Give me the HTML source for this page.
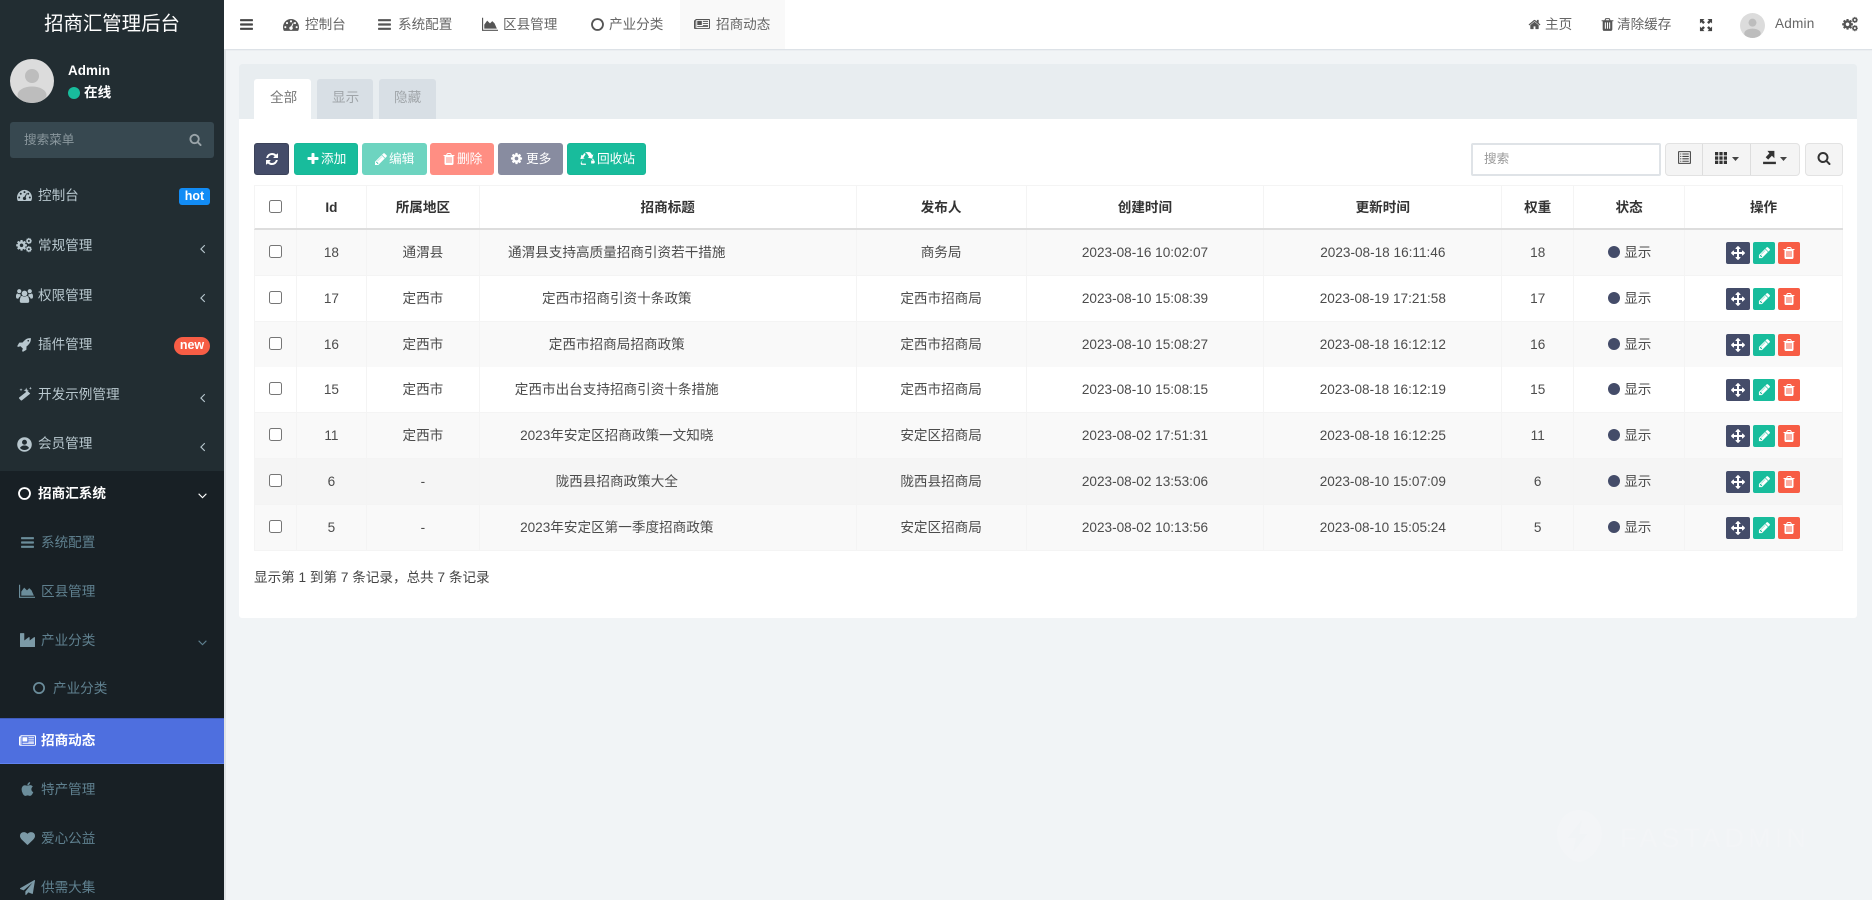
<!DOCTYPE html>
<html lang="zh"><head><meta charset="utf-8"><title>招商汇管理后台</title>
<style>
*{box-sizing:border-box}
html,body{margin:0;padding:0;width:1872px;height:900px;overflow:hidden;background:#f1f4f6;font:13.6px "Liberation Sans","Noto Sans CJK SC",sans-serif;color:#555}
.a,.t,svg.i{position:absolute}
.t{white-space:nowrap;line-height:20px}
svg.i{fill:currentColor;display:block}
#side{position:absolute;left:0;top:0;width:224px;height:900px;background:#222d32;overflow:hidden}
#side .m{color:#b8c7ce}
#side .s{color:#5f808f}
#hd{position:absolute;left:224px;top:0;width:1648px;height:49px;background:#fff}
.b{position:absolute;top:143px;height:32px;border-radius:3px;color:#fff;line-height:30px;white-space:nowrap;font-size:12.7px}
.r{position:absolute;left:254px;width:1589px;display:flex;border-bottom:1px solid #f4f4f4;border-left:1px solid #f4f4f4}
.r>div{border-right:1px solid #f4f4f4;text-align:center;position:relative;white-space:nowrap;color:#4c4c4c}
.r.h>div{font-weight:bold;color:#333}
.w1{width:42px}.w2{width:70px}.w3{width:113px}.w4{width:377px}.w5{width:170px}.w6{width:238px}.w7{width:238px}.w8{width:72px}.w9{width:111px}.w10{width:158px}
.cb{position:absolute;left:14px;width:13px;height:13px;background:#fff;border:1px solid #767676;border-radius:2.5px}
.d{position:absolute;left:34px;width:12px;height:12px;border-radius:50%;background:#444c69}
.st{position:absolute;left:50px}
.ab{position:absolute;height:22px;top:12px;border-radius:2px;color:#fff}
</style></head><body>
<svg width="0" height="0" style="position:absolute">
<symbol id="bars" viewBox="0 0 1792 1792"><path d="M1664 1344v128q0 26-19 45t-45 19h-1408q-26 0-45-19t-19-45v-128q0-26 19-45t45-19h1408q26 0 45 19t19 45zm0-512v128q0 26-19 45t-45 19h-1408q-26 0-45-19t-19-45v-128q0-26 19-45t45-19h1408q26 0 45 19t19 45zm0-512v128q0 26-19 45t-45 19h-1408q-26 0-45-19t-19-45v-128q0-26 19-45t45-19h1408q26 0 45 19t19 45z"/></symbol>
<symbol id="plus" viewBox="0 0 1792 1792"><path d="M1600 736v192q0 40-28 68t-68 28h-416v416q0 40-28 68t-68 28h-192q-40 0-68-28t-28-68v-416h-416q-40 0-68-28t-28-68v-192q0-40 28-68t68-28h416v-416q0-40 28-68t68-28h192q40 0 68 28t28 68v416h416q40 0 68 28t28 68z"/></symbol>
<symbol id="search" viewBox="0 0 1792 1792"><path d="M1216 832q0-185-131.5-316.5t-316.5-131.5-316.5 131.5-131.5 316.5 131.5 316.5 316.5 131.5 316.5-131.5 131.5-316.5zm512 832q0 52-38 90t-90 38q-54 0-90-38l-343-342q-179 124-399 124-143 0-273.5-55.5t-225-150-150-225-55.5-273.5 55.5-273.5 150-225 225-150 273.5-55.5 273.5 55.5 225 150 150 225 55.5 273.5q0 220-124 399l343 343q37 37 37 90z"/></symbol>
<symbol id="trash" viewBox="0 0 1792 1792"><path d="M704 1376v-704q0-14-9-23t-23-9h-64q-14 0-23 9t-9 23v704q0 14 9 23t23 9h64q14 0 23-9t9-23zm256 0v-704q0-14-9-23t-23-9h-64q-14 0-23 9t-9 23v704q0 14 9 23t23 9h64q14 0 23-9t9-23zm256 0v-704q0-14-9-23t-23-9h-64q-14 0-23 9t-9 23v704q0 14 9 23t23 9h64q14 0 23-9t9-23zm-544-992h448l-48-117q-7-9-17-11h-317q-10 2-17 11zm928 32v64q0 14-9 23t-23 9h-96v948q0 83-47 143.5t-113 60.5h-832q-66 0-113-58.5t-47-141.5v-952h-96q-14 0-23-9t-9-23v-64q0-14 9-23t23-9h309l70-167q15-37 54-63t79-26h320q40 0 79 26t54 63l70 167h309q14 0 23 9t9 23z"/></symbol>
<symbol id="pencil" viewBox="0 0 1792 1792"><path d="M491 1536l91-91-235-235-91 91v107h128v128h107zm523-928q0-22-22-22-10 0-17 7l-542 542q-7 7-7 17 0 22 22 22 10 0 17-7l542-542q7-7 7-17zm-54-192l416 416-832 832h-416v-416zm683 96q0 53-37 90l-166 166-416-416 166-165q36-38 90-38 53 0 91 38l235 234q37 39 37 91z"/></symbol>
<symbol id="move" viewBox="0 0 1792 1792"><path d="M1792 896q0 26-19 45l-256 256q-19 19-45 19t-45-19-19-45v-128h-384v384h128q26 0 45 19t19 45-19 45l-256 256q-19 19-45 19t-45-19l-256-256q-19-19-19-45t19-45 45-19h128v-384h-384v128q0 26-19 45t-45 19-45-19l-256-256q-19-19-19-45t19-45l256-256q19-19 45-19t45 19 19 45v128h384v-384h-128q-26 0-45-19t-19-45 19-45l256-256q19-19 45-19t45 19l256 256q19 19 19 45t-19 45-45 19h-128v384h384v-128q0-26 19-45t45-19 45 19l256 256q19 19 19 45z"/></symbol>
<symbol id="home" viewBox="0 0 1792 1792"><path d="M1472 992v480q0 26-19 45t-45 19h-384v-384h-256v384h-384q-26 0-45-19t-19-45v-480q0-1 .5-3t.5-3l575-474 575 474q1 2 1 6zm223-69l-62 74q-8 9-21 11h-3q-13 0-21-7l-692-577-692 577q-12 8-24 7-13-2-21-11l-62-74q-8-10-7-23.5t11-21.5l719-599q32-26 76-26t76 26l244 204v-195q0-14 9-23t23-9h192q14 0 23 9t9 23v408l219 182q10 8 11 21.5t-7 23.5z"/></symbol>
<symbol id="heart" viewBox="0 0 1792 1792"><path d="M896 1664q-26 0-44-18l-624-602q-10-8-27.5-26t-55.5-65.5-68-97.5-53.5-121-23.5-138q0-220 127-344t351-124q62 0 126.5 21.5t120 58 95.5 68.5 76 68q36-36 76-68t95.5-68.5 120-58 126.5-21.5q224 0 351 124t127 344q0 221-229 450l-623 600q-18 18-44 18z"/></symbol>
<symbol id="plane" viewBox="0 0 1792 1792"><path d="M1764 11q33 24 27 64l-256 1536q-5 29-32 45-14 8-31 8-11 0-24-5l-453-185-242 295q-18 23-49 23-13 0-22-4-19-7-30.5-23.5t-11.5-36.5v-349l864-1059-1069 925-395-162q-37-14-40-55-2-40 32-59l1664-960q15-9 32-9 20 0 36 11z"/></symbol>
<symbol id="rocket" viewBox="0 0 1792 1792"><path d="M1440 448q0-40-28-68t-68-28-68 28-28 68 28 68 68 28 68-28 28-68zm224-288q0 249-75.5 430.5t-253.5 360.5q-81 80-195 176l-20 379q-2 16-16 26l-384 224q-7 4-16 4-12 0-23-9l-64-64q-13-14-8-32l85-276-281-281-276 85q-3 1-9 1-14 0-23-9l-64-64q-17-19-5-39l224-384q10-14 26-16l379-20q96-114 176-195 188-187 358-258t431-71q14 0 24 9.5t10 22.5z"/></symbol>
<symbol id="circ" viewBox="0 0 1792 1792"><path d="M896 352q-148 0-273 73t-198 198-73 273 73 273 198 198 273 73 273-73 198-198 73-273-73-273-198-198-273-73zm768 544q0 209-103 385.5t-279.5 279.5-385.5 103-385.5-103-279.5-279.5-103-385.5 103-385.5 279.5-279.5 385.5-103 385.5 103 279.5 279.5 103 385.5z"/></symbol>
<symbol id="aleft" viewBox="0 0 1792 1792"><path d="M1203 544q0 13-10 23l-393 393 393 393q10 10 10 23t-10 23l-50 50q-10 10-23 10t-23-10l-466-466q-10-10-10-23t10-23l466-466q10-10 23-10t23 10l50 50q10 10 10 23z"/></symbol>
<symbol id="adown" viewBox="0 0 1792 1792"><path d="M1395 736q0 13-10 23l-466 466q-10 10-23 10t-23-10l-466-466q-10-10-10-23t10-23l50-50q10-10 23-10t23 10l393 393 393-393q10-10 23-10t23 10l50 50q10 10 10 23z"/></symbol>
<symbol id="refresh" viewBox="0 0 1792 1792"><path d="M1639 1056q0 5-1 7-64 268-268 434.5t-478 166.5q-146 0-282.5-55t-243.5-157l-129 129q-19 19-45 19t-45-19-19-45v-448q0-26 19-45t45-19h448q26 0 45 19t19 45-19 45l-137 137q71 66 161 102t187 36q134 0 250-65t186-179q11-17 53-117 8-23 30-23h192q13 0 22.5 9.5t9.5 22.5zm25-800v448q0 26-19 45t-45 19h-448q-26 0-45-19t-19-45 19-45l138-138q-148-137-349-137-134 0-250 65t-186 179q-11 17-53 117-8 23-30 23h-199q-13 0-22.5-9.5t-9.5-22.5v-7q65-268 270-434.5t480-166.5q146 0 284 55.5t245 156.5l130-129q19-19 45-19t45 19 19 45z"/></symbol>
<symbol id="cog" viewBox="0 0 1792 1792"><path d="M1152 896q0-106-75-181t-181-75-181 75-75 181 75 181 181 75 181-75 75-181zm512-109v222q0 12-8 23t-20 13l-185 28q-19 54-39 91 35 50 107 138 10 12 10 25t-9 23q-27 37-99 108t-94 71q-12 0-26-9l-138-108q-44 23-91 38-16 136-29 186-7 28-36 28h-222q-14 0-24.5-8.5t-11.5-21.5l-28-184q-49-16-90-37l-141 107q-10 9-25 9-14 0-25-11-126-114-165-168-7-10-7-23 0-12 8-23 15-21 51-66.5t54-70.5q-27-50-41-99l-183-27q-13-2-21-12.5t-8-23.5v-222q0-12 8-23t19-13l186-28q14-46 39-92-40-57-107-138-10-12-10-24 0-10 9-23 26-36 98.5-107.5t94.5-71.5q13 0 26 10l138 107q44-23 91-38 16-136 29-186 7-28 36-28h222q14 0 24.5 8.5t11.5 21.5l28 184q49 16 90 37l142-107q9-9 24-9 13 0 25 10 129 119 165 170 7 8 7 22 0 12-8 23-15 21-51 66.5t-54 70.5q26 50 41 98l183 28q13 2 21 12.5t8 23.5z"/></symbol>
<symbol id="cogs" viewBox="0 0 1792 1792"><use href="#cog" x="-80" y="230" width="1400" height="1400"/><use href="#cog" x="1040" y="40" width="800" height="800"/><use href="#cog" x="1040" y="960" width="800" height="800"/></symbol>
<symbol id="dash" viewBox="0 0 1792 1792"><path fill-rule="evenodd" d="M896 224C400 224 0 640 0 1136c0 150 35 290 100 420h1592c65-130 100-270 100-420 0-496-400-912-896-912zM896 370a120 120 0 1 1 0 240a120 120 0 1 1 0-240zM450 560a120 120 0 1 1 0 240a120 120 0 1 1 0-240zM260 1020a120 120 0 1 1 0 240a120 120 0 1 1 0-240zM1530 1020a120 120 0 1 1 0 240a120 120 0 1 1 0-240zM1340 560a120 120 0 1 1 0 240a120 120 0 1 1 0-240zM1130 620l70 40-170 440c40 40 70 90 70 150 0 110-90 190-200 190s-200-80-200-190 90-200 200-200z"/></symbol>
<symbol id="users" viewBox="0 0 1792 1792"><circle cx="896" cy="680" r="300"/><path d="M400 1500c0-300 100-560 250-560 80 60 160 90 246 90s166-30 246-90c150 0 250 260 250 560 0 110-80 170-180 170H580c-100 0-180-60-180-170z"/><circle cx="340" cy="440" r="220"/><circle cx="1452" cy="440" r="220"/><path d="M0 1000c0-180 50-320 160-320 60 50 120 70 190 70 50 0 90-10 130-30-30 80-20 170 40 240-120 30-220 120-260 260H110C40 1220 0 1120 0 1000zM1792 1000c0-180-50-320-160-320-60 50-120 70-190 70-50 0-90-10-130-30 30 80 20 170-40 240 120 30 220 120 260 260h150c70 0 110-100 110-220z"/></symbol>
<symbol id="magic" viewBox="0 0 1792 1792"><path d="M1254 580l330 330-1000 800q-60 50-120 0l-210-210q-50-60 0-120zM1100 200l80 230 230 80-230 80-80 230-80-230-230-80 230-80zM480 260l50 140 140 50-140 50-50 140-50-140-140-50 140-50zM1600 90l50 130 130 50-130 50-50 130-50-130-130-50 130-50z"/></symbol>
<symbol id="ucirc" viewBox="0 0 1792 1792"><path fill-rule="evenodd" d="M896 128a768 768 0 1 1 0 1536a768 768 0 1 1 0-1536zM896 400a260 260 0 1 0 0 520a260 260 0 1 0 0-520zM896 1000c-230 0-430 110-470 270 110 130 280 210 470 210s360-80 470-210c-40-160-240-270-470-270z"/></symbol>
<symbol id="apple" viewBox="0 0 1792 1792"><path d="M1585 1215q-39 125-123 250-129 196-257 196-49 0-140-32-86-32-151-32-61 0-142 33-81 34-132 34-152 0-301-259-147-261-147-503 0-228 113-374 113-144 284-144 72 0 177 30 104 30 138 30 45 0 143-34 102-34 173-34 119 0 213 65 52 36 104 100-79 67-114 118-65 94-65 207 0 124 69 223t158 126zm-376-1173q0 61-29 136-30 75-93 138-54 54-108 72-37 11-104 17 3-149 78-257 74-107 250-148 1 3 2.5 11t2.5 11q0 4 .5 10t.5 10z"/></symbol>
<symbol id="area" viewBox="0 0 1792 1792"><path d="M1792 1536v128H0V192h128v1344zM1664 1408H256V960l320-448 320 320 256-256 256 256 256 576z"/></symbol>
<symbol id="ind" viewBox="0 0 1792 1792"><path d="M448 0q26 0 45 19t19 45v891l536-429q17-14 40-14 26 0 45 19t19 45v379l536-429q17-14 40-14 26 0 45 19t19 45v1152q0 26-19 45t-45 19h-1664q-26 0-45-19t-19-45v-1664q0-26 19-45t45-19h384z" transform="translate(0 130) scale(1 .93)"/></symbol>
<symbol id="news" viewBox="0 0 2048 1792"><path fill-rule="evenodd" d="M260 256H1948q100 0 100 100V1400q0 130-130 130H130Q0 1530 0 1400V460q0-40 40-40H170V340q0-84 90-84zM290 380V1400q0 15-10 20H1890q30 0 30-30V380zM128 548V1400q0 15 15 20h15q10-5 10-20V548zM420 500H1000V1020H420zM1130 500H1800V620H1130zM1130 760H1800V880H1130zM1130 1020H1800V1140H1130zM420 1160H1800V1280H420z"/></symbol>
<symbol id="listalt" viewBox="0 0 1792 1792"><path fill-rule="evenodd" d="M224 128H1568Q1664 128 1664 224V1568Q1664 1664 1568 1664H224Q128 1664 128 1568V224Q128 128 224 128zM256 256V1536H1536V256zM384 416H512V544H384zM640 416H1408V544H640zM384 704H512V832H384zM640 704H1408V832H640zM384 992H512V1120H384zM640 992H1408V1120H640zM384 1280H512V1408H384zM640 1280H1408V1408H640z"/></symbol>
<symbol id="th" viewBox="0 0 1792 1792"><path d="M128 128H544V560H128zM688 128H1104V560H688zM1248 128H1664V560H1248zM128 680H544V1112H128zM688 680H1104V1112H688zM1248 680H1664V1112H1248zM128 1232H544V1664H128zM688 1232H1104V1664H688zM1248 1232H1664V1664H1248z"/></symbol>
<symbol id="exp" viewBox="0 0 1792 1792"><path d="M130 1400H1660V1680H130zM650 100H1480V980L1180 690 740 1150 440 860 880 400z"/></symbol>
<symbol id="full" viewBox="0 0 1792 1792"><path d="M120 120H700L520 300 760 540 540 760 300 520 120 700zM1672 120V700L1492 520 1252 760 1032 540 1272 300 1092 120zM120 1672V1092L300 1272 540 1032 760 1252 520 1492 700 1672zM1672 1672H1092L1272 1492 1032 1252 1252 1032 1492 1272 1672 1092z"/></symbol>
<symbol id="recy" viewBox="0 0 1792 1792"><path d="M640 130h480c80 0 140 50 180 110l150 240 150-90-150 520-540-120 170-90-200-330c-40-60-60-110-160-120zM500 250l180 110-270 440 160 100-530 70 140-520 150 90 110-180c20-40 40-80 60-110zM1540 880l210 350c60 110-20 270-160 270h-260v-360h330l-240-130zM360 990l-160 280c-50 100 20 240 150 240h360V1660l-570-10-40-100c-30-90-10-170 40-260z"/></symbol>
<symbol id="av" viewBox="0 0 44 44"><defs><clipPath id="ac"><circle cx="22" cy="22" r="22"/></clipPath></defs><g clip-path="url(#ac)"><rect width="44" height="44" fill="#dcdcdc"/><circle cx="22" cy="17" r="7" fill="#bdbdbd"/><ellipse cx="22" cy="36" rx="14.5" ry="8.5" fill="#bdbdbd"/></g></symbol>
</svg>

<div id="hd">
<svg class="i" style="left:15px;top:17px;width:15px;height:15px;color:#444"><use href="#bars"/></svg>
<svg class="i" style="left:59px;top:17px;width:16px;height:16px;color:#555"><use href="#dash"/></svg>
<div class="t" style="left:81px;top:15px;color:#666">控制台</div>
<svg class="i" style="left:153px;top:17px;width:15px;height:15px;color:#555"><use href="#bars"/></svg>
<div class="t" style="left:174px;top:15px;color:#666">系统配置</div>
<svg class="i" style="left:258px;top:16px;width:16px;height:16px;color:#555"><use href="#area"/></svg>
<div class="t" style="left:279px;top:15px;color:#666">区县管理</div>
<svg class="i" style="left:366px;top:17px;width:15px;height:15px;color:#555"><use href="#circ"/></svg>
<div class="t" style="left:385px;top:15px;color:#666">产业分类</div>
<div class="a" style="left:456px;top:0;width:105px;height:49px;background:#f9f9f9"></div>
<svg class="i" style="left:470px;top:16px;width:16px;height:16px;color:#555" viewBox="0 0 2048 1792"><use href="#news" width="2048" height="1792"/></svg>
<div class="t" style="left:492px;top:15px;color:#666">招商动态</div>
<svg class="i" style="left:1304px;top:18px;width:13px;height:13px;color:#555"><use href="#home"/></svg>
<div class="t" style="left:1321px;top:15px;color:#666">主页</div>
<svg class="i" style="left:1376px;top:17px;width:15px;height:15px;color:#555"><use href="#trash"/></svg>
<div class="t" style="left:1393px;top:15px;color:#666">清除缓存</div>
<svg class="i" style="left:1475px;top:18px;width:14px;height:14px;color:#444"><use href="#full"/></svg>
<svg class="i" style="left:1516px;top:13px;width:25px;height:25px"><use href="#av"/></svg>
<div class="t" style="left:1551px;top:14px;color:#666;letter-spacing:.2px">Admin</div>
<svg class="i" style="left:1618px;top:16px;width:16px;height:16px;color:#555"><use href="#cogs"/></svg>
</div>
<div class="a" style="left:224px;top:49px;width:1648px;height:1px;background:#dde2e7"></div>
<div class="a" style="left:224px;top:50px;width:1648px;height:1px;background:#ebeef1"></div>
<div class="a" style="left:224px;top:49px;width:1.5px;height:851px;background:#dfe3e6"></div>

<div id="side">
<div class="t" style="left:0;width:224px;text-align:center;top:14px;color:#fff;font-size:19.4px">招商汇管理后台</div>
<svg class="i" style="left:10px;top:59px;width:44px;height:44px"><use href="#av"/></svg>
<div class="t" style="left:68px;top:61px;color:#fff;font-weight:bold;letter-spacing:.1px;font-size:13.4px">Admin</div>
<div class="a" style="left:68px;top:87px;width:12px;height:12px;border-radius:50%;background:#18bc9c"></div>
<div class="t" style="left:84px;top:83px;color:#fff;font-weight:bold">在线</div>
<div class="a" style="left:10px;top:122px;width:204px;height:36px;background:#374850;border-radius:3px"></div>
<div class="t" style="left:24px;top:130px;color:#8a979d;font-size:12.6px">搜索菜单</div>
<svg class="i" style="left:189px;top:133px;width:13px;height:13px;color:#9aa4a9"><use href="#search"/></svg>

<div class="a" style="left:0;top:471px;width:224px;height:429px;background:#182025"></div>
<div class="a" style="left:0;top:718px;width:224px;height:46px;background:#4e6fdf;border-top:1px solid #3f5cbd;border-bottom:1px solid #5f82f0"></div>

<svg class="i m" style="left:17px;top:188px;width:15px;height:15px"><use href="#dash"/></svg><div class="t m" style="left:38px;top:186px">控制台</div>
<div class="a" style="left:179px;top:188px;width:31px;height:17px;border-radius:3px;background:#128cf5;color:#fff;font-weight:bold;font-size:12.5px;line-height:16px;text-align:center">hot</div>
<svg class="i m" style="left:16px;top:237px;width:16px;height:16px"><use href="#cogs"/></svg><div class="t m" style="left:38px;top:236px">常规管理</div>
<svg class="i m" style="left:195px;top:241px;width:15px;height:15px"><use href="#aleft"/></svg>
<svg class="i m" style="left:16px;top:287px;width:17px;height:17px"><use href="#users"/></svg><div class="t m" style="left:38px;top:286px">权限管理</div>
<svg class="i m" style="left:195px;top:290px;width:15px;height:15px"><use href="#aleft"/></svg>
<svg class="i m" style="left:17px;top:337px;width:15px;height:15px"><use href="#rocket"/></svg><div class="t m" style="left:38px;top:335px">插件管理</div>
<div class="a" style="left:174px;top:337px;width:36px;height:18px;border-radius:9px;background:#f75d45;color:#fff;font-weight:bold;font-size:12.5px;line-height:17px;text-align:center">new</div>
<svg class="i m" style="left:17px;top:386px;width:15px;height:15px"><use href="#magic"/></svg><div class="t m" style="left:38px;top:385px">开发示例管理</div>
<svg class="i m" style="left:195px;top:390px;width:15px;height:15px"><use href="#aleft"/></svg>
<svg class="i m" style="left:16px;top:436px;width:17px;height:17px"><use href="#ucirc"/></svg><div class="t m" style="left:38px;top:434px">会员管理</div>
<svg class="i m" style="left:195px;top:439px;width:15px;height:15px"><use href="#aleft"/></svg>
<svg class="i" style="left:17px;top:486px;width:15px;height:15px;color:#fff"><use href="#circ"/></svg><div class="t" style="left:38px;top:484px;color:#fff;font-weight:bold">招商汇系统</div>
<svg class="i" style="left:195px;top:488px;width:15px;height:15px;color:#fff"><use href="#adown"/></svg>

<svg class="i s" style="left:20px;top:535px;width:15px;height:15px;color:#6b8d9b"><use href="#bars"/></svg><div class="t s" style="left:41px;top:533px">系统配置</div>
<svg class="i s" style="left:19px;top:583px;width:16px;height:16px;color:#6b8d9b"><use href="#area"/></svg><div class="t s" style="left:41px;top:582px">区县管理</div>
<svg class="i s" style="left:20px;top:632px;width:15px;height:15px;color:#7c9aa7"><use href="#ind"/></svg><div class="t s" style="left:41px;top:631px">产业分类</div>
<svg class="i s" style="left:195px;top:635px;width:15px;height:15px"><use href="#adown"/></svg>
<svg class="i s" style="left:32px;top:681px;width:14px;height:14px;color:#6b8d9b"><use href="#circ"/></svg><div class="t s" style="left:53px;top:679px">产业分类</div>
<svg class="i" style="left:19px;top:733px;width:17px;height:15px;color:#fff" viewBox="0 0 2048 1792"><use href="#news" width="2048" height="1792"/></svg><div class="t" style="left:41px;top:731px;color:#fff;font-weight:bold">招商动态</div>
<svg class="i s" style="left:20px;top:782px;width:15px;height:15px;color:#6b8d9b"><use href="#apple"/></svg><div class="t s" style="left:41px;top:780px">特产管理</div>
<svg class="i s" style="left:20px;top:831px;width:15px;height:15px;color:#7c9aa7"><use href="#heart"/></svg><div class="t s" style="left:41px;top:829px">爱心公益</div>
<svg class="i s" style="left:20px;top:880px;width:15px;height:15px;color:#7c9aa7"><use href="#plane"/></svg><div class="t s" style="left:41px;top:878px">供需大集</div>
</div>

<!-- watermark -->
<svg class="a" style="left:1540px;top:800px" width="300" height="80"><path fill="#f3f5f7" fill-rule="evenodd" d="M39 10C52 10 62 21 62 34C62 49 48 62 39 62C30 62 17 49 17 34C17 21 26 10 39 10ZM42 20L28 38H36L33 52L47 34H39Z"/><text x="80" y="47" font-family="Liberation Sans" font-size="27" fill="#f3f5f7" textLength="186" lengthAdjust="spacing">FASTADMIN</text></svg>

<!-- panel -->
<div class="a" style="left:239px;top:64px;width:1618px;height:554px;background:#fff;border-radius:3px;overflow:hidden">
<div class="a" style="left:0;top:0;width:1618px;height:55px;background:#e8edf0"></div>
</div>
<div class="a" style="left:254px;top:79px;width:57px;height:40px;background:#fff;border-radius:3px 3px 0 0"></div>
<div class="t" style="left:270px;top:88px;color:#777">全部</div>
<div class="a" style="left:317px;top:79px;width:56px;height:40px;background:#d8dfe5;border-radius:3px 3px 0 0"></div>
<div class="t" style="left:332px;top:88px;color:#a0a5a9">显示</div>
<div class="a" style="left:379px;top:79px;width:57px;height:40px;background:#d8dfe5;border-radius:3px 3px 0 0"></div>
<div class="t" style="left:394px;top:88px;color:#a0a5a9">隐藏</div>

<!-- toolbar -->
<div class="b" style="left:254px;width:35px;background:#444c69;border:1px solid #3b4259"><svg class="i" style="left:10px;top:8px;width:14px;height:14px"><use href="#refresh"/></svg></div>
<div class="b" style="left:294px;width:64px;background:#18bc9c;border:1px solid #18b797"><svg class="i" style="left:11px;top:8px;width:14px;height:14px"><use href="#plus"/></svg><span class="a" style="left:26px">添加</span></div>
<div class="b" style="left:362px;width:65px;background:#6dd4c0"><svg class="i" style="left:12px;top:9px;width:14px;height:14px"><use href="#pencil"/></svg><span class="a" style="left:27px;top:1px">编辑</span></div>
<div class="b" style="left:430px;width:64px;background:#ff8e83"><svg class="i" style="left:12px;top:9px;width:14px;height:14px"><use href="#trash"/></svg><span class="a" style="left:27px;top:1px">删除</span></div>
<div class="b" style="left:498px;width:65px;background:#888ca0"><svg class="i" style="left:12px;top:9px;width:13px;height:13px"><use href="#cog"/></svg><span class="a" style="left:28px;top:1px">更多</span></div>
<div class="b" style="left:567px;width:79px;background:#18bc9c;border:1px solid #18b797"><svg class="i" style="left:12px;top:7px;width:15px;height:15px"><use href="#recy"/></svg><span class="a" style="left:29px">回收站</span></div>

<div class="a" style="left:1471px;top:143px;width:190px;height:33px;background:#fff;border:2px solid #dfe3e7;border-radius:2px"></div>
<div class="t" style="left:1484px;top:149px;color:#999;font-size:12.6px">搜索</div>
<div class="a" style="left:1665px;top:143px;width:135px;height:33px;background:#f4f4f4;border:1px solid #e2e2e2;border-radius:4px"></div>
<div class="a" style="left:1702px;top:144px;width:1px;height:31px;background:#ddd"></div>
<div class="a" style="left:1750px;top:144px;width:1px;height:31px;background:#ddd"></div>
<svg class="i" style="left:1677px;top:150px;width:15px;height:15px;color:#444"><use href="#listalt"/></svg>
<svg class="i" style="left:1714px;top:151px;width:14px;height:14px;color:#333"><use href="#th"/></svg>
<svg class="a" style="left:1732px;top:157px" width="7" height="4"><path d="M0 0H7L3.500 4Z" fill="#444"/></svg>
<svg class="i" style="left:1762px;top:150px;width:15px;height:15px;color:#333"><use href="#exp"/></svg>
<svg class="a" style="left:1780px;top:157px" width="7" height="4"><path d="M0 0H7L3.500 4Z" fill="#444"/></svg>
<div class="a" style="left:1805px;top:143px;width:38px;height:33px;background:#f4f4f4;border:1px solid #e2e2e2;border-radius:4px"></div>
<svg class="i" style="left:1817px;top:151px;width:14px;height:14px;color:#333"><use href="#search"/></svg>

<!-- table -->
<div class="a" style="left:254px;top:185px;width:1589px;height:1px;background:#f4f4f4"></div>
<div class="r h" style="top:186px;height:44px;line-height:43px;border-bottom:2px solid #ddd"><div class="w1"><i class="cb" style="top:14px"></i></div><div class="w2">Id</div><div class="w3">所属地区</div><div class="w4">招商标题</div><div class="w5">发布人</div><div class="w6">创建时间</div><div class="w7">更新时间</div><div class="w8">权重</div><div class="w9">状态</div><div class="w10">操作</div></div>

<div class="r" style="top:230px;height:46px;line-height:45px;background:#f9f9f9"><div class="w1"><i class="cb" style="top:15px"></i></div><div class="w2">18</div><div class="w3">通渭县</div><div class="w4" style="padding-right:102px">通渭县支持高质量招商引资若干措施</div><div class="w5">商务局</div><div class="w6">2023-08-16 10:02:07</div><div class="w7">2023-08-18 16:11:46</div><div class="w8">18</div><div class="w9"><i class="d" style="top:16px"></i><span class="st">显示</span></div><div class="w10"><i class="ab" style="left:41px;width:24px;background:#444c69"><svg class="i" style="left:5px;top:4px;width:14px;height:14px"><use href="#move"/></svg></i><i class="ab" style="left:68px;width:22px;background:#18bc9c"><svg class="i" style="left:5px;top:4px;width:13px;height:13px"><use href="#pencil"/></svg></i><i class="ab" style="left:93px;width:22px;background:#f75d45"><svg class="i" style="left:4px;top:4px;width:14px;height:14px"><use href="#trash"/></svg></i></div></div>

<div class="r" style="top:276px;height:46px;line-height:45px;background:#fff"><div class="w1"><i class="cb" style="top:15px"></i></div><div class="w2">17</div><div class="w3">定西市</div><div class="w4" style="padding-right:102px">定西市招商引资十条政策</div><div class="w5">定西市招商局</div><div class="w6">2023-08-10 15:08:39</div><div class="w7">2023-08-19 17:21:58</div><div class="w8">17</div><div class="w9"><i class="d" style="top:16px"></i><span class="st">显示</span></div><div class="w10"><i class="ab" style="left:41px;width:24px;background:#444c69"><svg class="i" style="left:5px;top:4px;width:14px;height:14px"><use href="#move"/></svg></i><i class="ab" style="left:68px;width:22px;background:#18bc9c"><svg class="i" style="left:5px;top:4px;width:13px;height:13px"><use href="#pencil"/></svg></i><i class="ab" style="left:93px;width:22px;background:#f75d45"><svg class="i" style="left:4px;top:4px;width:14px;height:14px"><use href="#trash"/></svg></i></div></div>

<div class="r" style="top:322px;height:46px;line-height:45px;background:#f9f9f9"><div class="w1"><i class="cb" style="top:15px"></i></div><div class="w2">16</div><div class="w3">定西市</div><div class="w4" style="padding-right:102px">定西市招商局招商政策</div><div class="w5">定西市招商局</div><div class="w6">2023-08-10 15:08:27</div><div class="w7">2023-08-18 16:12:12</div><div class="w8">16</div><div class="w9"><i class="d" style="top:16px"></i><span class="st">显示</span></div><div class="w10"><i class="ab" style="left:41px;width:24px;background:#444c69"><svg class="i" style="left:5px;top:4px;width:14px;height:14px"><use href="#move"/></svg></i><i class="ab" style="left:68px;width:22px;background:#18bc9c"><svg class="i" style="left:5px;top:4px;width:13px;height:13px"><use href="#pencil"/></svg></i><i class="ab" style="left:93px;width:22px;background:#f75d45"><svg class="i" style="left:4px;top:4px;width:14px;height:14px"><use href="#trash"/></svg></i></div></div>

<div class="r" style="top:367px;height:46px;line-height:45px;background:#fff"><div class="w1"><i class="cb" style="top:15px"></i></div><div class="w2">15</div><div class="w3">定西市</div><div class="w4" style="padding-right:102px">定西市出台支持招商引资十条措施</div><div class="w5">定西市招商局</div><div class="w6">2023-08-10 15:08:15</div><div class="w7">2023-08-18 16:12:19</div><div class="w8">15</div><div class="w9"><i class="d" style="top:16px"></i><span class="st">显示</span></div><div class="w10"><i class="ab" style="left:41px;width:24px;background:#444c69"><svg class="i" style="left:5px;top:4px;width:14px;height:14px"><use href="#move"/></svg></i><i class="ab" style="left:68px;width:22px;background:#18bc9c"><svg class="i" style="left:5px;top:4px;width:13px;height:13px"><use href="#pencil"/></svg></i><i class="ab" style="left:93px;width:22px;background:#f75d45"><svg class="i" style="left:4px;top:4px;width:14px;height:14px"><use href="#trash"/></svg></i></div></div>

<div class="r" style="top:413px;height:46px;line-height:45px;background:#f9f9f9"><div class="w1"><i class="cb" style="top:15px"></i></div><div class="w2">11</div><div class="w3">定西市</div><div class="w4" style="padding-right:102px">2023年安定区招商政策一文知晓</div><div class="w5">安定区招商局</div><div class="w6">2023-08-02 17:51:31</div><div class="w7">2023-08-18 16:12:25</div><div class="w8">11</div><div class="w9"><i class="d" style="top:16px"></i><span class="st">显示</span></div><div class="w10"><i class="ab" style="left:41px;width:24px;background:#444c69"><svg class="i" style="left:5px;top:4px;width:14px;height:14px"><use href="#move"/></svg></i><i class="ab" style="left:68px;width:22px;background:#18bc9c"><svg class="i" style="left:5px;top:4px;width:13px;height:13px"><use href="#pencil"/></svg></i><i class="ab" style="left:93px;width:22px;background:#f75d45"><svg class="i" style="left:4px;top:4px;width:14px;height:14px"><use href="#trash"/></svg></i></div></div>

<div class="r" style="top:459px;height:46px;line-height:45px;background:#f5f5f5"><div class="w1"><i class="cb" style="top:15px"></i></div><div class="w2">6</div><div class="w3">-</div><div class="w4" style="padding-right:102px">陇西县招商政策大全</div><div class="w5">陇西县招商局</div><div class="w6">2023-08-02 13:53:06</div><div class="w7">2023-08-10 15:07:09</div><div class="w8">6</div><div class="w9"><i class="d" style="top:16px"></i><span class="st">显示</span></div><div class="w10"><i class="ab" style="left:41px;width:24px;background:#444c69"><svg class="i" style="left:5px;top:4px;width:14px;height:14px"><use href="#move"/></svg></i><i class="ab" style="left:68px;width:22px;background:#18bc9c"><svg class="i" style="left:5px;top:4px;width:13px;height:13px"><use href="#pencil"/></svg></i><i class="ab" style="left:93px;width:22px;background:#f75d45"><svg class="i" style="left:4px;top:4px;width:14px;height:14px"><use href="#trash"/></svg></i></div></div>

<div class="r" style="top:505px;height:46px;line-height:45px;background:#f9f9f9"><div class="w1"><i class="cb" style="top:15px"></i></div><div class="w2">5</div><div class="w3">-</div><div class="w4" style="padding-right:102px">2023年安定区第一季度招商政策</div><div class="w5">安定区招商局</div><div class="w6">2023-08-02 10:13:56</div><div class="w7">2023-08-10 15:05:24</div><div class="w8">5</div><div class="w9"><i class="d" style="top:16px"></i><span class="st">显示</span></div><div class="w10"><i class="ab" style="left:41px;width:24px;background:#444c69"><svg class="i" style="left:5px;top:4px;width:14px;height:14px"><use href="#move"/></svg></i><i class="ab" style="left:68px;width:22px;background:#18bc9c"><svg class="i" style="left:5px;top:4px;width:13px;height:13px"><use href="#pencil"/></svg></i><i class="ab" style="left:93px;width:22px;background:#f75d45"><svg class="i" style="left:4px;top:4px;width:14px;height:14px"><use href="#trash"/></svg></i></div></div>

<div class="t" style="left:254px;top:568px;color:#444">显示第 1 到第 7 条记录，总共 7 条记录</div>
</body></html>
